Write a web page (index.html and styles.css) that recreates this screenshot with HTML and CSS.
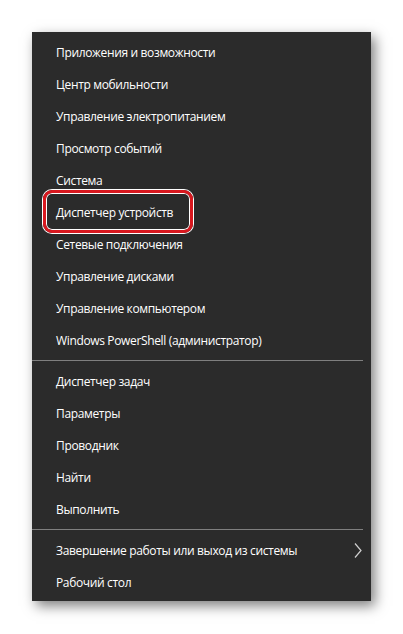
FILE: index.html
```html
<!DOCTYPE html>
<html lang="ru">
<head>
<meta charset="utf-8">
<link rel="stylesheet" href="styles.css">
</head>
<body>
<div class="menu">
  <div class="item">Приложения и возможности</div>
  <div class="item">Центр мобильности</div>
  <div class="item">Управление электропитанием</div>
  <div class="item">Просмотр событий</div>
  <div class="item">Система</div>
  <div class="item marked">Диспетчер устройств</div>
  <div class="item">Сетевые подключения</div>
  <div class="item">Управление дисками</div>
  <div class="item">Управление компьютером</div>
  <div class="item">Windows PowerShell (администратор)</div>
  <div class="sep"></div>
  <div class="item">Диспетчер задач</div>
  <div class="item">Параметры</div>
  <div class="item">Проводник</div>
  <div class="item">Найти</div>
  <div class="item">Выполнить</div>
  <div class="sep"></div>
  <div class="item sub">Завершение работы или выход из системы
    <svg class="chev" width="8" height="15" viewBox="0 0 8 15"><path d="M1 0.5 L7 7.5 L1 14.5" fill="none" stroke="#d0d0d0" stroke-width="1.2"/></svg>
  </div>
  <div class="item">Рабочий стол</div>
</div>
</body>
</html>
```
FILE: styles.css
```css
html, body {
  margin: 0;
  padding: 0;
  background: #ffffff;
}
body {
  width: 403px;
  height: 634px;
  overflow: hidden;
  font-family: "Open Sans", "Noto Sans", sans-serif;
}
.menu {
  margin: 32px 0 0 32px;
  width: 339px;
  height: 569px;
  box-sizing: border-box;
  padding-top: 4px;
  background: #2b2b2b;
  box-shadow: 4px 5px 12px rgba(0, 0, 0, 0.5);
  display: flex;
  flex-direction: column;
}
.item {
  position: relative;
  height: 32px;
  display: flex;
  align-items: center;
  padding-left: 24px;
  color: #ffffff;
  font-size: 12px;
  letter-spacing: -0.35px;
}
.sep {
  height: 1px;
  margin: 4px 8px 4px 0;
  background: #7f7f7f;
}
.chev {
  position: absolute;
  right: 9px;
  top: 9px;
}
.marked::after {
  content: "";
  position: absolute;
  left: 11px;
  top: -6px;
  width: 144px;
  height: 37px;
  border: 3px solid #d9181f;
  border-radius: 9px;
  box-shadow: 0 0 0 1px #ffffff, inset 0 0 0 1px #ffffff;
}
```
